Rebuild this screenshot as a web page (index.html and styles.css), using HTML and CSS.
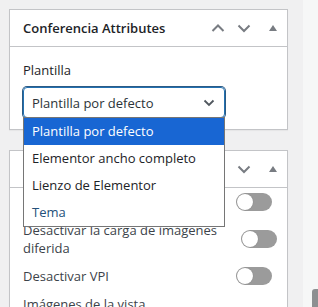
FILE: index.html
```html
<!DOCTYPE html>
<html lang="es">
<head>
    <meta charset="UTF-8">
    <meta name="viewport" content="width=device-width, initial-scale=1.0">
    <title>Conferencia Attributes</title>
    <link rel="stylesheet" href="styles.css">
</head>
<body>
    <div class="sidebar">
        <div class="postbox">
            <div class="postbox-header">
                <h2>Conferencia Attributes</h2>
                <div class="handle-actions">
                    <svg class="handle" viewBox="0 0 14 14"><path d="M1.5 10 L7 4.5 L12.5 10"/></svg>
                    <svg class="handle" viewBox="0 0 14 14"><path d="M1.5 4.5 L7 10 L12.5 4.5"/></svg>
                    <svg class="toggle-arrow" viewBox="0 0 8 6"><path d="M0 6 L4 0 L8 6 Z"/></svg>
                </div>
            </div>
            <div class="inside">
                <p class="attr-label">Plantilla</p>
                <div class="select-wrap">
                    <div class="select-box">
                        <span>Plantilla por defecto</span>
                        <svg class="select-caret" viewBox="0 0 12 8"><path d="M1.5 1.5 L6 6 L10.5 1.5"/></svg>
                    </div>
                    <ul class="select-list">
                        <li class="is-active">Plantilla por defecto</li>
                        <li>Elementor ancho completo</li>
                        <li>Lienzo de Elementor</li>
                        <li class="is-hover">Tema</li>
                    </ul>
                </div>
            </div>
        </div>

        <div class="postbox">
            <div class="postbox-header">
                <h2></h2>
                <div class="handle-actions">
                    <svg class="handle" viewBox="0 0 14 14"><path d="M1.5 10 L7 4.5 L12.5 10"/></svg>
                    <svg class="handle" viewBox="0 0 14 14"><path d="M1.5 4.5 L7 10 L12.5 4.5"/></svg>
                    <svg class="toggle-arrow" viewBox="0 0 8 6"><path d="M0 6 L4 0 L8 6 Z"/></svg>
                </div>
            </div>
            <div class="inside settings">
                <div class="setting-row">
                    <span class="setting-label"></span>
                    <span class="switch"></span>
                </div>
                <div class="setting-row">
                    <span class="setting-label">Desactivar la carga de imágenes<br>diferida</span>
                    <span class="switch switch-wide"></span>
                </div>
                <div class="setting-row">
                    <span class="setting-label">Desactivar VPI</span>
                    <span class="switch"></span>
                </div>
                <div class="setting-row">
                    <span class="setting-label">Imágenes de la vista</span>
                </div>
            </div>
        </div>
    </div>

    <div class="scroll-track">
        <div class="scroll-thumb"></div>
    </div>
</body>
</html>
```

FILE: styles.css
```css
* {
    margin: 0;
    padding: 0;
    box-sizing: border-box;
}

body {
    font-family: "Segoe UI", "Open Sans", "Noto Sans", sans-serif;
    font-size: 13px;
    color: #3c434a;
    background: #f0f0f1;
    height: 307px;
    overflow: hidden;
    display: flex;
}

.sidebar {
    width: 303px;
    padding: 9px 15px 0 9px;
    display: flex;
    flex-direction: column;
    gap: 20px;
}

.postbox {
    background: #fff;
    border: 1px solid #c3c4c7;
    box-shadow: 0 1px 1px rgba(0, 0, 0, 0.04);
}

.postbox-header {
    height: 37px;
    border-bottom: 1px solid #c3c4c7;
    display: flex;
    align-items: center;
    justify-content: space-between;
    padding: 0 8px 0 13px;
}

.postbox-header h2 {
    font-size: 13px;
    font-weight: 600;
    color: #1d2327;
}

.handle-actions {
    display: flex;
    align-items: center;
}

.handle {
    width: 14px;
    height: 14px;
    margin-right: 12px;
    fill: none;
    stroke: #787c82;
    stroke-width: 2;
}

.toggle-arrow {
    width: 8px;
    height: 6px;
    margin: 0 2px 0 6px;
    fill: #787c82;
}

.inside {
    padding: 14px 13px 11px;
}

.attr-label {
    font-size: 13px;
    font-weight: 500;
    line-height: 18px;
    color: #1d2327;
    margin-bottom: 8px;
}

.select-wrap {
    position: relative;
    width: 202px;
}

.select-box {
    height: 31px;
    border: 1px solid #2271b1;
    border-radius: 4px;
    box-shadow: 0 0 0 1px #2c5b85;
    display: flex;
    align-items: center;
    justify-content: space-between;
    padding: 0 9px 0 8px;
    font-size: 13px;
    color: #2c3338;
}

.select-caret {
    width: 12px;
    height: 8px;
    fill: none;
    stroke: #50575e;
    stroke-width: 1.8;
}

.select-list {
    position: absolute;
    top: 30px;
    left: 0;
    width: 202px;
    list-style: none;
    background: #fff;
    border: 1px solid #767676;
    z-index: 2;
}

.select-list li {
    height: 27px;
    line-height: 27px;
    padding: 0 8px;
    font-size: 13px;
    color: #1d2327;
}

.select-list li.is-active {
    background: #1866d3;
    color: #fff;
}

.select-list li.is-hover {
    color: #24507a;
}

.settings {
    padding: 0 13px;
}

.setting-row {
    display: flex;
    align-items: center;
    justify-content: space-between;
    min-height: 28px;
    padding: 5px 0;
    line-height: 18px;
    font-size: 13px;
}

.switch {
    position: relative;
    width: 36px;
    height: 18px;
    border-radius: 9px;
    background: #9b9b9b;
    margin-right: 2px;
    flex-shrink: 0;
}

.switch::before {
    content: "";
    position: absolute;
    top: 1px;
    left: 1px;
    width: 16px;
    height: 16px;
    border-radius: 50%;
    background: #fff;
    box-shadow: 0 0 1px rgba(0, 0, 0, 0.3);
}

.switch-wide {
    margin-right: -3px;
}

.scroll-track {
    position: relative;
    flex: 1;
    background: #f6f7f7;
}

.scroll-thumb {
    position: absolute;
    right: 0;
    top: 289px;
    width: 6px;
    height: 30px;
    border-radius: 3px 0 0 0;
    background: #8d8f91;
}
```
